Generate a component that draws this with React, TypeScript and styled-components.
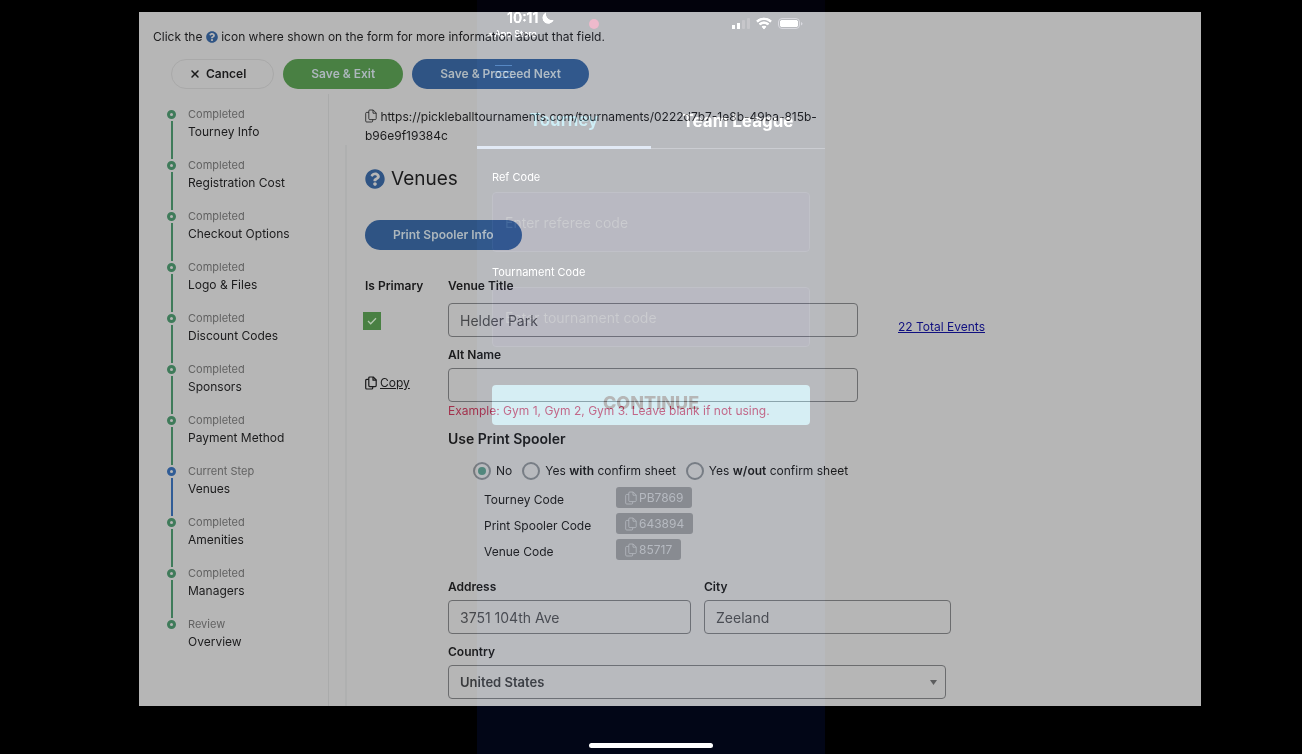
import React from "react";
import styled, { createGlobalStyle, css } from "styled-components";
import { FaQuestionCircle } from "react-icons/fa";
import { FaXmark } from "react-icons/fa6";

const ink = "#1b1b1c";
const green = "#498043";
const blue = "#2f5484";
const paper = "#b6b6b6";

const GlobalStyle = createGlobalStyle`
  *, *::before, *::after { box-sizing: border-box; }
  body {
    margin: 0;
    background: #000;
    color: ${ink};
    font: 400 12px/18px Inter, "Liberation Sans", sans-serif;
  }
  button, input, select { font: inherit; color: inherit; }
`;

const Stage = styled.div`
  position: relative;
  isolation: isolate;
  min-height: 100vh;
  padding: 12px 101px 48px 139px;
  background: #000;
  overflow: hidden;
`;

const Page = styled.div`
  min-height: calc(100vh - 60px);
  display: flex;
  flex-direction: column;
  background: ${paper};
`;

const Hint = styled.p`
  margin: 0;
  padding: 16px 14px 0;
  svg {
    width: 12px;
    height: 12px;
    color: ${blue};
    vertical-align: -2px;
  }
`;

const Toolbar = styled.div`
  display: flex;
  gap: 9px;
  padding: 13px 32px 5px;
`;

const Pill = styled.button<{ $tone?: "green" | "blue" }>`
  display: inline-flex;
  align-items: center;
  gap: 5px;
  height: 30px;
  padding: 0 28px;
  border: 0;
  border-radius: 15px;
  font-weight: 600;
  color: #adb7bd;
  background: ${(p) => (p.$tone === "green" ? green : blue)};
  ${(p) =>
    !p.$tone &&
    css`
      color: ${ink};
      background: transparent;
      border: 1px solid #a9a9a9;
      padding: 0 27px 0 17px;
    `}
`;

const Columns = styled.div`
  flex: 1;
  display: flex;
`;

const Steps = styled.ol`
  list-style: none;
  flex: 0 0 190px;
  margin: 0;
  padding: 11px 0 0 28px;
  border-right: 1px solid #aaabab;
`;

const Step = styled.li<{ $color: string }>`
  display: grid;
  grid-template-columns: 9px 1fr;
  column-gap: 12px;
  height: 51px;
  color: ${(p) => p.$color};
`;

const Rail = styled.span`
  display: flex;
  flex-direction: column;
  align-items: center;
  gap: 2px;
  padding-top: 5px;
  margin-bottom: -3px;
  &::before {
    content: "";
    width: 9px;
    height: 9px;
    border: 3px solid currentColor;
    border-radius: 50%;
  }
  &::after {
    content: "";
    flex: 1;
    width: 2px;
    background: currentColor;
  }
  li:last-child > &::after {
    display: none;
  }
`;

const StepLink = styled.a`
  color: ${ink};
  text-decoration: none;
  line-height: 17px;
  small {
    display: block;
    font-size: 11px;
    line-height: 18px;
    color: #626262;
  }
`;

const Content = styled.main`
  flex: 1;
  min-width: 0;
  margin-left: 16px;
  padding-top: 13px;
`;

const Guide = styled.div`
  border-left: 2px solid #afb0b0;
  padding: 21px 18px 7px;
`;

const Address = styled.p`
  margin: 0;
  padding-left: 20px;
  max-width: 480px;
  line-height: 19px;
`;

const Title = styled.h1`
  display: flex;
  align-items: center;
  gap: 6px;
  margin: 0 0 28px;
  font-size: 19px;
  line-height: 26px;
  font-weight: 400;
  svg {
    width: 20px;
    height: 20px;
    color: ${blue};
  }
`;

const Venue = styled.div`
  display: grid;
  grid-template-columns: 83px minmax(0, 1fr);
  margin-top: 27px;
`;

const Aside = styled.div`
  display: flex;
  flex-direction: column;
  align-items: flex-start;
`;

const Caption = styled.label`
  font-weight: 600;
  white-space: nowrap;
`;

const Tick = styled.span`
  display: grid;
  width: 18px;
  height: 18px;
  margin: 17px 0 44px -2px;
  > * {
    grid-area: 1 / 1;
  }
  input {
    appearance: none;
    width: 18px;
    height: 18px;
    margin: 0;
    background: ${green};
  }
  svg {
    place-self: center;
    pointer-events: none;
  }
`;

const CopyLink = styled.a`
  display: flex;
  align-items: center;
  gap: 3px;
  color: ${ink};
`;

const Row = styled.div<{ $gap?: number }>`
  display: flex;
  align-items: center;
  gap: ${(p) => p.$gap ?? 0}px;
  & + & {
    margin-top: 9px;
  }
`;

const Field = styled.div<{ $width: number; $gap?: number }>`
  display: flex;
  flex-direction: column;
  flex: 0 1 ${(p) => p.$width}px;
  max-width: ${(p) => p.$width}px;
  min-width: 0;
  gap: ${(p) => p.$gap ?? 4}px;
  label {
    font-weight: 600;
  }
`;

const box = css`
  width: 100%;
  height: 34px;
  padding: 0 11px;
  border: 1px solid #6b6c6e;
  border-radius: 4px;
  background: transparent;
  outline: 0;
`;

const TextBox = styled.input`
  ${box}
  font-size: 14px;
  color: #47484b;
`;

const SelectWrap = styled.div`
  display: grid;
  align-items: center;
  > * {
    grid-area: 1 / 1;
  }
  svg {
    justify-self: end;
    margin-right: 9px;
    pointer-events: none;
  }
`;

const Select = styled.select`
  ${box}
  appearance: none;
  font-size: 13px;
  font-weight: 600;
  color: #3a3b3d;
`;

const Events = styled.a`
  color: #101080;
  margin-top: 40px;
  white-space: nowrap;
`;

const Help = styled.p`
  margin: 0 0 9px;
  color: #a2304b;
`;

const SectionTitle = styled.h2`
  margin: 0;
  font-size: 14px;
  line-height: 20px;
  font-weight: 600;
`;

const Choices = styled.div`
  display: flex;
  align-items: center;
  gap: 10px;
  padding: 13px 0 7px 25px;
  label {
    display: flex;
    align-items: center;
    gap: 5px;
    white-space: nowrap;
  }
  b {
    font-weight: 600;
  }
`;

const Radio = styled.input`
  appearance: none;
  display: grid;
  place-items: center;
  width: 18px;
  height: 18px;
  margin: 0;
  border: 2px solid #75797d;
  border-radius: 50%;
  &:checked::before {
    content: "";
    width: 8px;
    height: 8px;
    border-radius: 50%;
    background: #4f8375;
  }
`;

const Codes = styled.dl`
  display: grid;
  grid-template-columns: 132px auto;
  justify-content: start;
  justify-items: start;
  row-gap: 5px;
  margin: 0 0 18px 36px;
  dt {
    padding-top: 4px;
    height: 21px;
  }
  dd {
    margin: 0;
  }
`;

const Badge = styled.button`
  display: flex;
  align-items: center;
  gap: 2px;
  height: 21px;
  padding: 0 9px;
  border: 0;
  border-radius: 3px;
  background: #868789;
  color: #b4b6b9;
`;

const CopyGlyph = styled.svg`
  width: 12px;
  height: 14px;
  fill: none;
  stroke: currentColor;
  stroke-linejoin: round;
  vertical-align: -2px;
`;

/* The phone is added to the page as light, so its colours are dim here. */
const glow = "#505050";

const Phone = styled.section`
  position: absolute;
  top: 0;
  bottom: 0;
  left: 50%;
  width: 348px;
  transform: translateX(-50%);
  display: flex;
  flex-direction: column;
  background: linear-gradient(#02020c 12px, #020408 12px, #020408 calc(100% - 48px), #020617 calc(100% - 48px));
  color: ${glow};
  mix-blend-mode: plus-lighter;
`;

const StatusBar = styled.div`
  display: flex;
  justify-content: space-between;
  height: 40px;
  padding: 9px 22px 0 10px;
`;

const Clock = styled.div`
  display: grid;
  grid-template-columns: auto auto;
  justify-content: start;
  column-gap: 4px;
  color: #707070;
  strong {
    padding-left: 20px;
    font-size: 14px;
    line-height: 18px;
    font-weight: 600;
  }
  svg {
    margin-top: 3px;
  }
  small {
    font-size: 9px;
    line-height: 12px;
  }
`;

const RecDot = styled.span`
  width: 10px;
  height: 10px;
  margin: 10px auto 0 35px;
  border-radius: 50%;
  background: #380416;
`;

const Signals = styled.div`
  display: flex;
  gap: 6px;
  padding-top: 8px;
`;

const MenuButton = styled.button`
  display: flex;
  flex-direction: column;
  gap: 5px;
  width: 17px;
  margin: 25px 0 0 18px;
  padding: 0;
  border: 0;
  background: none;
  span {
    height: 1px;
    background: #283440;
  }
`;

const Tabs = styled.div`
  display: grid;
  grid-template-columns: 1fr 1fr;
  margin-top: 30px;
`;

const Tab = styled.button<{ $active?: boolean }>`
  height: 41px;
  padding: 0 0 14px;
  border: 0;
  border-bottom: ${(p) => (p.$active ? "3px solid #2c3440" : "1px solid #15171c")};
  background: none;
  font-size: 17px;
  font-weight: 700;
  color: ${(p) => (p.$active ? "#183840" : glow)};
`;

const PhoneForm = styled.form`
  display: flex;
  flex-direction: column;
  padding: 20px 15px 0;
  label {
    font-size: 11px;
    line-height: 17px;
  }
`;

const CodeBox = styled.input`
  height: 60px;
  margin: 6px 0 12px;
  padding: 0 12px;
  border: 1px solid #0a0b12;
  border-radius: 4px;
  background: #03030c;
  font-size: 14px;
  outline: 0;
  &::placeholder {
    color: #15161a;
    opacity: 1;
  }
`;

const Continue = styled.button`
  height: 40px;
  margin-top: 26px;
  padding: 0 0 5px;
  border: 0;
  border-radius: 4px;
  background: #20383e;
  color: #000;
  font-size: 18px;
  font-weight: 800;
`;

const HomeBar = styled.div`
  width: 124px;
  height: 5px;
  margin: auto auto 6px;
  border-radius: 3px;
  background: #fff;
`;

function CopyIcon({ weight = 0.8 }: { weight?: number }) {
  return (
    <CopyGlyph viewBox="0 0 12 14" strokeWidth={weight} aria-hidden="true">
      <path d="M4.8 1h3.4l3 3v5.6q0 1-1 1H4.800q-1 0-1-1V2q0-1 1-1z" />
      <path d="M8 1v3.2h3.2M3.8 3.4H1.7q-1 0-1 1V12q0 1 1 1h5q1 0 1-1v-1.4" />
    </CopyGlyph>
  );
}

const steps = [
  "Tourney Info",
  "Registration Cost",
  "Checkout Options",
  "Logo & Files",
  "Discount Codes",
  "Sponsors",
  "Payment Method",
  "Venues",
  "Amenities",
  "Managers",
  "Overview",
];

const stateOf = (name: string) =>
  name === "Venues" ? "Current Step" : name === "Overview" ? "Review" : "Completed";

const codes = [
  ["Tourney Code", "PB7869"],
  ["Print Spooler Code", "643894"],
  ["Venue Code", "85717"],
];

function VenueForm() {
  return (
    <Venue>
      <Aside>
        <Caption htmlFor="primary">Is Primary</Caption>
        <Tick>
          <input id="primary" type="checkbox" defaultChecked />
          <svg width="10" height="8" viewBox="0 0 10 8" fill="none" stroke="#b4c8b0" strokeWidth="1.3">
            <path d="M1 4l2.7 2.7L9 1.2" />
          </svg>
        </Tick>
        <CopyLink href="#copy">
          <CopyIcon weight={1.2} /> Copy
        </CopyLink>
      </Aside>
      <div>
        <Row $gap={40}>
          <Field $width={410} $gap={8}>
            <label htmlFor="title">Venue Title</label>
            <TextBox id="title" defaultValue="Helder Park" />
          </Field>
          <Events href="#events">22 Total Events</Events>
        </Row>
        <Row>
          <Field $width={410}>
            <label htmlFor="alt">Alt Name</label>
            <TextBox id="alt" />
          </Field>
        </Row>
        <Help>Example: Gym 1, Gym 2, Gym 3. Leave blank if not using.</Help>
        <SectionTitle>Use Print Spooler</SectionTitle>
        <Choices>
          <label><Radio type="radio" name="spooler" defaultChecked />No</label>
          <label><Radio type="radio" name="spooler" /><span>Yes <b>with</b> confirm sheet</span></label>
          <label><Radio type="radio" name="spooler" /><span>Yes <b>w/out</b> confirm sheet</span></label>
        </Choices>
        <Codes>
          {codes.map(([name, code]) => (
            <React.Fragment key={name}>
              <dt>{name}</dt>
              <dd><Badge type="button"><CopyIcon />{code}</Badge></dd>
            </React.Fragment>
          ))}
        </Codes>
        <Row $gap={13}>
          <Field $width={243}>
            <label htmlFor="street">Address</label>
            <TextBox id="street" defaultValue="3751 104th Ave" />
          </Field>
          <Field $width={247}>
            <label htmlFor="city">City</label>
            <TextBox id="city" defaultValue="Zeeland" />
          </Field>
        </Row>
        <Row>
          <Field $width={498}>
            <label htmlFor="country">Country</label>
            <SelectWrap>
              <Select id="country" defaultValue="United States">
                <option>United States</option>
              </Select>
              <svg width="7" height="5" viewBox="0 0 7 5"><path d="M0 0h7L3.5 5z" fill="#5c5d5e" /></svg>
            </SelectWrap>
          </Field>
        </Row>
      </div>
    </Venue>
  );
}

function PhoneScreen() {
  return (
    <Phone>
      <StatusBar>
        <Clock>
          <strong>10:11</strong>
          <svg width="12" height="12" viewBox="0 0 12 12" fill="currentColor">
            <path d="M4 .6A5.7 5.7 0 1 0 11.6 8 6.2 6.2 0 0 1 4 .6z" />
          </svg>
          <small>◂ App Store</small>
        </Clock>
        <RecDot />
        <Signals>
          <svg width="18" height="13" viewBox="0 0 18 13">
            <g fill="#606060">
              <rect x="0" y="8" width="3" height="4" rx="1" />
              <rect x="5" y="6" width="3" height="6" rx="1" />
            </g>
            <g fill="#101014">
              <rect x="10" y="3" width="3" height="9" rx="1" />
              <rect x="15" y="1" width="3" height="11" rx="1" />
            </g>
          </svg>
          <svg width="16" height="13" viewBox="0 0 16 13" fill="none" stroke="#606060" strokeWidth="2.2">
            <path d="M1 4.6a10 10 0 0 1 14 0M3.6 7.4a6.2 6.2 0 0 1 8.8 0" />
            <path d="M8 12.3L5.7 9.8a3.4 3.4 0 0 1 4.6 0z" fill="#606060" stroke="none" />
          </svg>
          <svg width="25" height="13" viewBox="0 0 25 13">
            <rect x="0.5" y="1.5" width="21" height="10" rx="3.5" fill="none" stroke="#24242a" />
            <rect x="2" y="3" width="18" height="7" rx="2.5" fill="#606060" />
            <path d="M23 5v3.4q1.5-.5 1.5-1.7T23 5z" fill="#24242a" />
          </svg>
        </Signals>
      </StatusBar>
      <MenuButton type="button" aria-label="Menu">
        <span />
        <span />
        <span />
      </MenuButton>
      <Tabs>
        <Tab type="button" $active>Tourney</Tab>
        <Tab type="button">Team League</Tab>
      </Tabs>
      <PhoneForm>
        <label htmlFor="ref">Ref Code</label>
        <CodeBox id="ref" placeholder="Enter referee code" />
        <label htmlFor="tournament">Tournament Code</label>
        <CodeBox id="tournament" placeholder="Enter tournament code" />
        <Continue type="button">CONTINUE</Continue>
      </PhoneForm>
      <HomeBar />
    </Phone>
  );
}

export default function App() {
  return (
    <>
      <GlobalStyle />
      <Stage>
        <Page>
          <Hint>
            Click the <FaQuestionCircle /> icon where shown on the form for more information about that field.
          </Hint>
          <Toolbar>
            <Pill type="button"><FaXmark size={12} />Cancel</Pill>
            <Pill type="button" $tone="green">Save &amp; Exit</Pill>
            <Pill type="button" $tone="blue">Save &amp; Proceed Next</Pill>
          </Toolbar>
          <Columns>
            <Steps>
              {steps.map((name) => (
                <Step key={name} $color={name === "Venues" ? "#305c96" : "#3f7b5a"}>
                  <Rail />
                  <StepLink href="#step"><small>{stateOf(name)}</small>{name}</StepLink>
                </Step>
              ))}
            </Steps>
            <Content>
              <Address>
                <CopyIcon /> https://pickleballtournaments.com/tournaments/0222d7b7-1e8b-49ba-815b-b96e9f19384c
              </Address>
              <Guide>
                <Title><FaQuestionCircle />Venues</Title>
                <Pill type="button" $tone="blue">Print Spooler Info</Pill>
                <VenueForm />
              </Guide>
            </Content>
          </Columns>
        </Page>
        <PhoneScreen />
      </Stage>
    </>
  );
}
